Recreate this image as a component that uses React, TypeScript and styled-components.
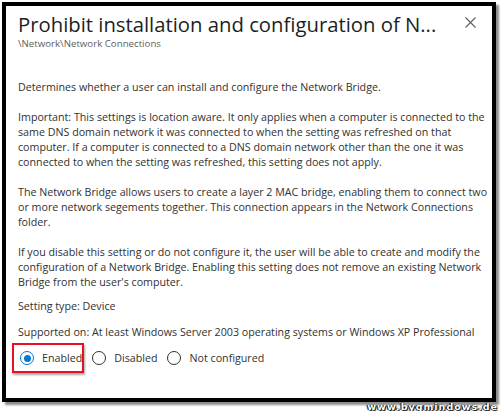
import React from "react";
import styled, { createGlobalStyle } from "styled-components";

const Global = createGlobalStyle`
  html, body { margin: 0; padding: 0; background: #ffffff; }
  body { font-family: "Open Sans", "Noto Sans", sans-serif; color: #323130; }
  * { box-sizing: border-box; }
`;

const Page = styled.div`
  position: relative;
  width: 504px;
  height: 411px;
  padding: 2px 0 0 2px;
  overflow: hidden;
`;

const Frame = styled.div`
  width: 494px;
  height: 400px;
  border: 4px solid #000;
  background: #fff;
  box-shadow: 3px 3px 2px rgba(0, 0, 0, 0.45);
  padding: 0 12px;
  display: flex;
  flex-direction: column;
`;

const Header = styled.div`
  display: flex;
  align-items: flex-start;
  justify-content: space-between;
  height: 26px;
  margin-top: 5px;
`;

const Title = styled.h1`
  margin: 0;
  font-family: "Open Sans", sans-serif;
  font-weight: 400;
  font-size: 20.3px;
  line-height: 26px;
  color: #201f1e;
  white-space: nowrap;
`;

const Close = styled.button`
  border: 0;
  background: none;
  padding: 0;
  margin: 5px 4px 0 0;
  width: 12px;
  height: 12px;
  display: flex;
  align-items: center;
  justify-content: center;
`;

const Subtitle = styled.div`
  font-size: 9.7px;
  line-height: 14px;
  color: #605e5c;
`;

const Description = styled.div`
  margin-top: 29px;
  font-size: 10.7px;
  line-height: 15px;
  color: #323130;
`;

const Para = styled.p`
  margin: 0 0 15px 0;
  &:last-child { margin-bottom: 0; }
`;

const Line = styled.span`
  display: block;
  white-space: nowrap;
`;

const Meta = styled.div<{ $gap: number }>`
  font-size: 10.7px;
  line-height: 15px;
  margin-top: ${(p) => p.$gap}px;
  white-space: nowrap;
`;

const RadioRow = styled.div`
  display: flex;
  align-items: center;
  margin-top: 3px;
  margin-left: -6px;
`;

const Option = styled.label<{ $highlight?: boolean }>`
  display: flex;
  align-items: center;
  gap: 8px;
  height: 30px;
  padding: 0 0 0 6px;
  font-size: 10.7px;
  color: #323130;
  border: 2px solid ${(p) => (p.$highlight ? "#e81123" : "transparent")};
  box-shadow: ${(p) => (p.$highlight ? "1px 2px 2px rgba(0,0,0,0.35)" : "none")};
`;

const Circle = styled.span<{ $checked?: boolean }>`
  width: 14px;
  height: 14px;
  border-radius: 50%;
  border: 1px solid ${(p) => (p.$checked ? "#0078d4" : "#323130")};
  display: flex;
  align-items: center;
  justify-content: center;
  &::after {
    content: "";
    width: 7px;
    height: 7px;
    border-radius: 50%;
    background: ${(p) => (p.$checked ? "#0078d4" : "transparent")};
  }
`;

const Watermark = styled.div`
  position: absolute;
  right: 6px;
  bottom: -1px;
  font-family: "DejaVu Sans", sans-serif;
  font-weight: 700;
  font-size: 9.5px;
  letter-spacing: 1px;
  color: #fff;
  text-shadow: 0 0 1px #000, 1px 1px 1px #000, -1px 0 1px #000;
`;

const paragraphs: string[][] = [
  ["Determines whether a user can install and configure the Network Bridge."],
  [
    "Important: This settings is location aware. It only applies when a computer is connected to the",
    "same DNS domain network it was connected to when the setting was refreshed on that",
    "computer. If a computer is connected to a DNS domain network other than the one it was",
    "connected to when the setting was refreshed, this setting does not apply.",
  ],
  [
    "The Network Bridge allows users to create a layer 2 MAC bridge, enabling them to connect two",
    "or more network segements together. This connection appears in the Network Connections",
    "folder.",
  ],
  [
    "If you disable this setting or do not configure it, the user will be able to create and modify the",
    "configuration of a Network Bridge. Enabling this setting does not remove an existing Network",
    "Bridge from the user's computer.",
  ],
];

export default function App() {
  return (
    <>
      <Global />
      <Page>
        <Frame>
          <Header>
            <Title>Prohibit installation and configuration of N...</Title>
            <Close aria-label="Close">
              <svg width="11" height="11" viewBox="0 0 11 11">
                <path d="M0.5 0.5 L10.5 10.5 M10.5 0.5 L0.5 10.5" stroke="#605e5c" strokeWidth="1.1" fill="none" />
              </svg>
            </Close>
          </Header>
          <Subtitle>\Network\Network Connections</Subtitle>
          <Description>
            {paragraphs.map((lines, i) => (
              <Para key={i}>
                {lines.map((l, j) => (
                  <Line key={j}>{l}</Line>
                ))}
              </Para>
            ))}
          </Description>
          <Meta $gap={9}>Setting type: Device</Meta>
          <Meta $gap={11}>Supported on: At least Windows Server 2003 operating systems or Windows XP Professional</Meta>
          <RadioRow>
            <Option $highlight>
              <Circle $checked />
              Enabled
            </Option>
            <Option>
              <Circle />
              Disabled
            </Option>
            <Option>
              <Circle />
              Not configured
            </Option>
          </RadioRow>
        </Frame>
        <Watermark>www.bygmindows.de</Watermark>
      </Page>
    </>
  );
}
